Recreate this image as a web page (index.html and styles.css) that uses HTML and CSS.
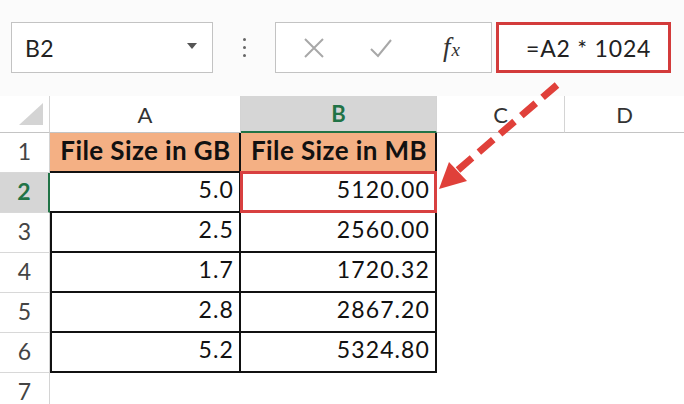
FILE: index.html
```html
<!DOCTYPE html>
<html>
<head>
<meta charset="utf-8">
<link rel="stylesheet" href="styles.css">
</head>
<body>
<div class="app">
  <div class="toolbar">
    <div class="namebox">
      <span class="name">B2</span>
      <svg class="caret" width="10" height="6" viewBox="0 0 10 6"><path d="M0 0 H10 L5 6 Z" fill="#555"/></svg>
    </div>
    <div class="dots"><span></span><span></span><span></span></div>
    <div class="buttons">
      <svg class="icon" width="22" height="22" viewBox="0 0 22 22"><path d="M2 2 L20 20 M20 2 L2 20" stroke="#a8a8a8" stroke-width="2" fill="none"/></svg>
      <svg class="icon" width="24" height="22" viewBox="0 0 24 22"><path d="M2 12 L9 19 L22 3" stroke="#a8a8a8" stroke-width="2" fill="none"/></svg>
      <span class="fx">f<span class="x">x</span></span>
    </div>
    <div class="formula">=A2 * 1024</div>
  </div>

  <div class="sheet">
    <div class="corner"><svg width="24" height="22" viewBox="0 0 24 22"><path d="M24 0 V22 H0 Z" fill="#d4d4d4"/></svg></div>
    <div class="ch">A</div>
    <div class="ch sel">B</div>
    <div class="ch">C</div>
    <div class="ch last">D</div>

    <div class="rh">1</div>
    <div class="c head">File Size in GB</div>
    <div class="c head">File Size in MB</div>
    <div class="c"></div>
    <div class="c"></div>

    <div class="rh sel">2</div>
    <div class="c t first">5.0</div>
    <div class="c t active">5120.00</div>
    <div class="c"></div>
    <div class="c"></div>

    <div class="rh">3</div>
    <div class="c t first">2.5</div>
    <div class="c t">2560.00</div>
    <div class="c"></div>
    <div class="c"></div>

    <div class="rh">4</div>
    <div class="c t first">1.7</div>
    <div class="c t">1720.32</div>
    <div class="c"></div>
    <div class="c"></div>

    <div class="rh">5</div>
    <div class="c t first">2.8</div>
    <div class="c t">2867.20</div>
    <div class="c"></div>
    <div class="c"></div>

    <div class="rh">6</div>
    <div class="c t first">5.2</div>
    <div class="c t">5324.80</div>
    <div class="c"></div>
    <div class="c"></div>

    <div class="rh">7</div>
    <div class="c"></div>
    <div class="c"></div>
    <div class="c"></div>
    <div class="c"></div>
  </div>

  <svg class="arrow" width="684" height="404" viewBox="0 0 684 404">
    <line x1="557" y1="85" x2="458" y2="170" stroke="#e0403a" stroke-width="7" stroke-dasharray="19 9"/>
    <polygon points="439,189 449,162 467,181" fill="#e0403a"/>
  </svg>
</div>
</body>
</html>
```

FILE: styles.css
```css
* { box-sizing: border-box; }
html, body { margin: 0; padding: 0; }
body {
  width: 684px;
  height: 404px;
  overflow: hidden;
  background: #ffffff;
  font-family: Lato, "Liberation Sans", sans-serif;
  color: #1a1a1a;
}
.app { position: relative; width: 684px; height: 404px; }

.toolbar {
  height: 96px;
  padding: 22px 0 23px 11px;
  display: flex;
  background: #fbfbfb;
}
.namebox {
  width: 202px;
  border: 1px solid #c3c3c3;
  background: #fff;
  display: flex;
  align-items: center;
  justify-content: space-between;
  padding: 0 15px 0 13px;
}
.name { font-size: 23px; color: #222; letter-spacing: 0.5px; }
.caret { margin-bottom: 4px; }
.dots {
  width: 62px;
  display: flex;
  flex-direction: column;
  align-items: center;
  justify-content: center;
  gap: 5px;
}
.dots span { width: 3px; height: 3px; border-radius: 50%; background: #666; }
.buttons {
  width: 217px;
  border: 1px solid #c3c3c3;
  background: #fff;
  display: flex;
  align-items: center;
  padding-left: 27px;
}
.buttons .icon:nth-child(2) { margin-left: 44px; }
.fx {
  margin-left: 50px;
  font-family: "Liberation Serif", serif;
  font-style: italic;
  font-size: 27px;
  color: #333;
  line-height: 1;
}
.fx .x { font-size: 19px; margin-left: 1px; }
.formula {
  margin-left: 4px;
  width: 175px;
  border: 3px solid #d33b3b;
  background: #fff;
  display: flex;
  align-items: center;
  padding-left: 27px;
  font-size: 23px;
  color: #222;
  letter-spacing: 0.8px;
}

.sheet {
  display: grid;
  grid-template-columns: 50px 191px 196px 128px 119px;
  grid-template-rows: 37px repeat(7, 40px);
}
.corner {
  border-right: 1px solid #d4d4d4;
  border-bottom: 1px solid #c4c4c4;
  display: flex;
  align-items: flex-end;
  justify-content: flex-end;
  padding: 0 6px 7px 0;
}
.ch {
  border-right: 1px solid #d4d4d4;
  border-bottom: 1px solid #c4c4c4;
  display: flex;
  align-items: center;
  justify-content: center;
  font-size: 22px;
  color: #333;
}
.ch.last { border-right: none; }
.ch.sel {
  background: #d6d6d6;
  border-bottom: 2px solid #217346;
  color: #217346;
  font-weight: bold;
}
.rh {
  border-right: 1px solid #d4d4d4;
  border-bottom: 1px solid #d8d8d8;
  display: flex;
  align-items: flex-end;
  justify-content: center;
  padding-bottom: 7px;
  font-size: 23px;
  color: #444;
}
.rh.sel {
  background: #d6d6d6;
  border-right: 2px solid #217346;
  color: #217346;
  font-weight: bold;
}
.c {
  display: flex;
  align-items: flex-end;
  justify-content: flex-end;
  padding: 0 5px 8px 0;
  font-size: 23px;
  letter-spacing: 1.1px;
  color: #111;
}
.c.head {
  background: #f4b084;
  justify-content: center;
  padding: 0 0 5px 2px;
  font-weight: bold;
  font-size: 26px;
  letter-spacing: 0.4px;
  border-right: 2px solid #111;
  border-bottom: 2px solid #111;
}
.c.t {
  border-right: 2px solid #111;
  border-bottom: 2px solid #111;
}
.c.t.first { border-left: 2px solid #111; }
.rh.sel + .c.t.first { border-left: none; }
.c.active { position: relative; }
.c.active::after {
  content: "";
  position: absolute;
  left: -1px;
  top: -2px;
  right: -2px;
  bottom: -2px;
  border: 3px solid #d84040;
}

.arrow { position: absolute; left: 0; top: 0; pointer-events: none; }
```
